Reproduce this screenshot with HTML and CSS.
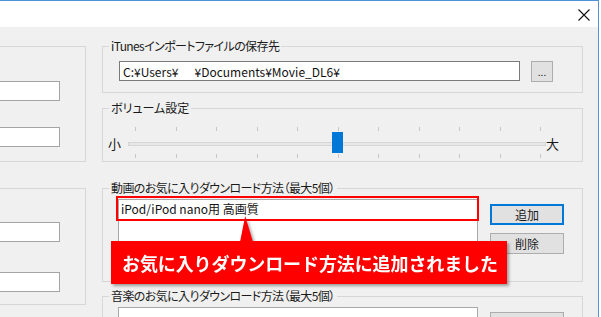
FILE: index.html
```html
<!DOCTYPE html>
<html lang="ja">
<head>
    <meta charset="UTF-8">
    <meta name="viewport" content="width=device-width, initial-scale=1.0">
    <title>設定</title>
    <link rel="stylesheet" href="styles.css">
</head>
<body>
    <div class="window">
        <div class="titlebar">
            <svg class="close" width="12" height="12" viewBox="0 0 12 12">
                <path d="M0.5 0.5 L11.5 11.5 M11.5 0.5 L0.5 11.5" stroke="#111" stroke-width="1.1" fill="none"/>
            </svg>
        </div>

        <div class="content">
            <!-- 左側のグループ (一部だけ見えている) -->
            <div class="left-col">
                <div class="side-group side-a">
                    <input type="text" class="side-input" readonly>
                    <input type="text" class="side-input" readonly>
                </div>
                <div class="side-group side-b">
                    <input type="text" class="side-input" readonly>
                    <input type="text" class="side-input" readonly>
                </div>
            </div>

            <div class="right-col">
                <fieldset class="group">
                    <legend>iTunesインポートファイルの保存先</legend>
                    <div class="group-body path-body">
                        <input type="text" class="path-input" value="C:¥Users¥&nbsp;&nbsp;&nbsp;&nbsp;&nbsp;&nbsp;¥Documents¥Movie_DL6¥" readonly>
                        <button class="btn btn-browse">...</button>
                    </div>
                </fieldset>

                <fieldset class="group group-volume">
                    <legend>ボリューム設定</legend>
                    <div class="group-body volume-body">
                        <span class="scale-label">小</span>
                        <div class="slider">
                            <div class="ticks">
                                <span></span><span></span><span></span><span></span><span></span><span></span>
                                <span></span><span></span><span></span><span></span><span></span>
                            </div>
                            <div class="track"></div>
                            <div class="ticks ticks-bottom">
                                <span></span><span></span><span></span><span></span><span></span><span></span>
                                <span></span><span></span><span></span><span></span><span></span>
                            </div>
                            <div class="thumb"></div>
                        </div>
                        <span class="scale-label">大</span>
                    </div>
                </fieldset>

                <fieldset class="group group-movie">
                    <legend>動画のお気に入りダウンロード方法（最大5個）</legend>
                    <div class="group-body list-body">
                        <div class="list-row">
                            <div class="listbox">
                                <div class="list-item">iPod/iPod nano用 高画質</div>
                                <div class="highlight"></div>
                            </div>
                            <div class="list-buttons">
                                <button class="btn btn-side btn-focus">追加</button>
                                <button class="btn btn-side">削除</button>
                            </div>
                            <div class="callout">お気に入りダウンロード方法に追加されました</div>
                        </div>
                    </div>
                </fieldset>

                <fieldset class="group group-music">
                    <legend>音楽のお気に入りダウンロード方法（最大5個）</legend>
                    <div class="group-body list-body">
                        <div class="list-row">
                            <div class="listbox"></div>
                            <div class="list-buttons">
                                <!-- 下端で切れているのでラベルは見えない -->
                                <button class="btn btn-side"></button>
                            </div>
                        </div>
                    </div>
                </fieldset>
            </div>
        </div>
    </div>
</body>
</html>
```

FILE: styles.css
```css
body {
    margin: 0;
    background: #fff;
    font-family: "Noto Sans CJK JP", "Noto Sans", sans-serif;
    font-size: 12px;
    color: #1a1a1a;
}
.window {
    width: 599px;
    height: 317px;
    box-sizing: border-box;
    border-top: 1px solid #4f93d6;
    border-right: 1px solid #4f93d6;
    background: #f0f0f0;
    overflow: hidden;
}
.titlebar {
    height: 26px;
    background: #fff;
    display: flex;
    justify-content: flex-end;
    align-items: center;
    padding-top: 2px;
    box-sizing: border-box;
}
.close {
    margin-right: 8px;
}
.content {
    display: flex;
    padding-top: 12px;
}

/* 左側 */
.left-col {
    width: 86px;
    padding-top: 7px;
}
.side-group {
    box-sizing: border-box;
    width: 86px;
    border: 1px solid #d7d7d7;
    border-left: none;
    display: flex;
    flex-direction: column;
}
.side-a {
    padding: 34px 0 14px;
}
.side-b {
    margin-top: 26px;
    padding: 33px 0 12px;
}
.side-input {
    box-sizing: border-box;
    width: 60px;
    height: 20px;
    margin: 0;
    border: 1px solid #a5a5a5;
    border-left: none;
    background: #fff;
}
.side-a .side-input + .side-input {
    margin-top: 26px;
}
.side-b .side-input + .side-input {
    margin-top: 30px;
}

/* 右側 */
.right-col {
    margin-left: 16px;
    width: 481px;
}
.group {
    margin: 0;
    padding: 0;
    min-width: 0;
    border: 1px solid #d7d7d7;
}
.group legend {
    margin-left: 6px;
    padding: 0 2px;
    line-height: 14px;
    letter-spacing: -0.6px;
    font-feature-settings: "palt";
}
.group-volume legend { letter-spacing: 0; }
.group-volume { margin-top: 8px; }
.group-movie { margin-top: 19px; }
.group-music { margin-top: 7px; }

.path-body {
    display: flex;
    align-items: flex-start;
    padding: 8px 0 10px 16px;
}
.path-input {
    box-sizing: border-box;
    width: 401px;
    height: 20px;
    margin: 0;
    padding: 0 3px;
    border: 1px solid #7a7a7a;
    background: #fff;
    font: inherit;
    font-size: 12px;
    color: #111;
}
.btn {
    box-sizing: border-box;
    margin: 0;
    padding: 0;
    background: #e1e1e1;
    border: 1px solid #adadad;
    font: inherit;
    font-size: 12px;
    color: #1a1a1a;
}
.btn-browse {
    width: 22px;
    height: 21px;
    margin-left: 11px;
    font-size: 10px;
    line-height: 14px;
}

/* ボリューム */
.volume-body {
    display: flex;
    align-items: center;
    height: 31px;
    padding: 12px 0 3px 5px;
}
.scale-label {
    font-size: 13px;
    width: 13px;
    line-height: 16px;
    margin-top: 3px;
}
.scale-label:first-child {
    margin-right: 7px;
}
.slider {
    position: relative;
    width: 418px;
}
.ticks {
    display: flex;
    justify-content: space-between;
    height: 4px;
    padding: 0 5px 0 7px;
}
.ticks span {
    width: 1px;
    height: 4px;
    background: #c6c6c6;
}
.ticks-bottom {
    margin-top: 8px;
}
.track {
    box-sizing: border-box;
    margin-top: 11px;
    height: 4px;
    background: #e7e7e7;
    border: 1px solid #d6d6d6;
}
.thumb {
    position: absolute;
    left: 204px;
    top: 5px;
    width: 11px;
    height: 21px;
    background: #0078d7;
}

/* お気に入りリスト */
.list-body {
    padding: 4px 0 10px 15px;
}
.list-row {
    position: relative;
    display: flex;
    align-items: flex-start;
}
.listbox {
    position: relative;
    box-sizing: border-box;
    width: 360px;
    height: 72px;
    border: 1px solid #a8a8a8;
    background: #fff;
}
.list-item {
    padding-left: 2px;
    line-height: 18px;
    color: #111;
}
.highlight {
    position: absolute;
    left: -3px;
    top: -4px;
    box-sizing: border-box;
    width: 363px;
    height: 25px;
    border: 2px solid #ff0000;
}
.list-buttons {
    display: flex;
    flex-direction: column;
    gap: 8px;
    margin-left: 12px;
    padding-top: 5px;
}
.btn-side {
    width: 74px;
    height: 21px;
    line-height: 17px;
}
.btn-focus {
    border: 2px solid #0078d7;
}
.callout {
    position: absolute;
    z-index: 2;
    left: -7px;
    top: 42px;
    box-sizing: border-box;
    width: 396px;
    height: 43px;
    padding-left: 11px;
    display: flex;
    align-items: center;
    background: #ff0000;
    color: #fff;
    font-size: 18px;
    font-weight: bold;
    letter-spacing: -0.1px;
    filter: drop-shadow(2px 2px 1.5px rgba(0, 0, 0, 0.35));
}
.callout::before {
    content: "";
    position: absolute;
    left: 129px;
    top: -25px;
    width: 13px;
    height: 26px;
    background: #ff0000;
    clip-path: polygon(0 100%, 100% 100%, 40% 0);
}
.group-music .listbox {
    height: 40px;
}
```
